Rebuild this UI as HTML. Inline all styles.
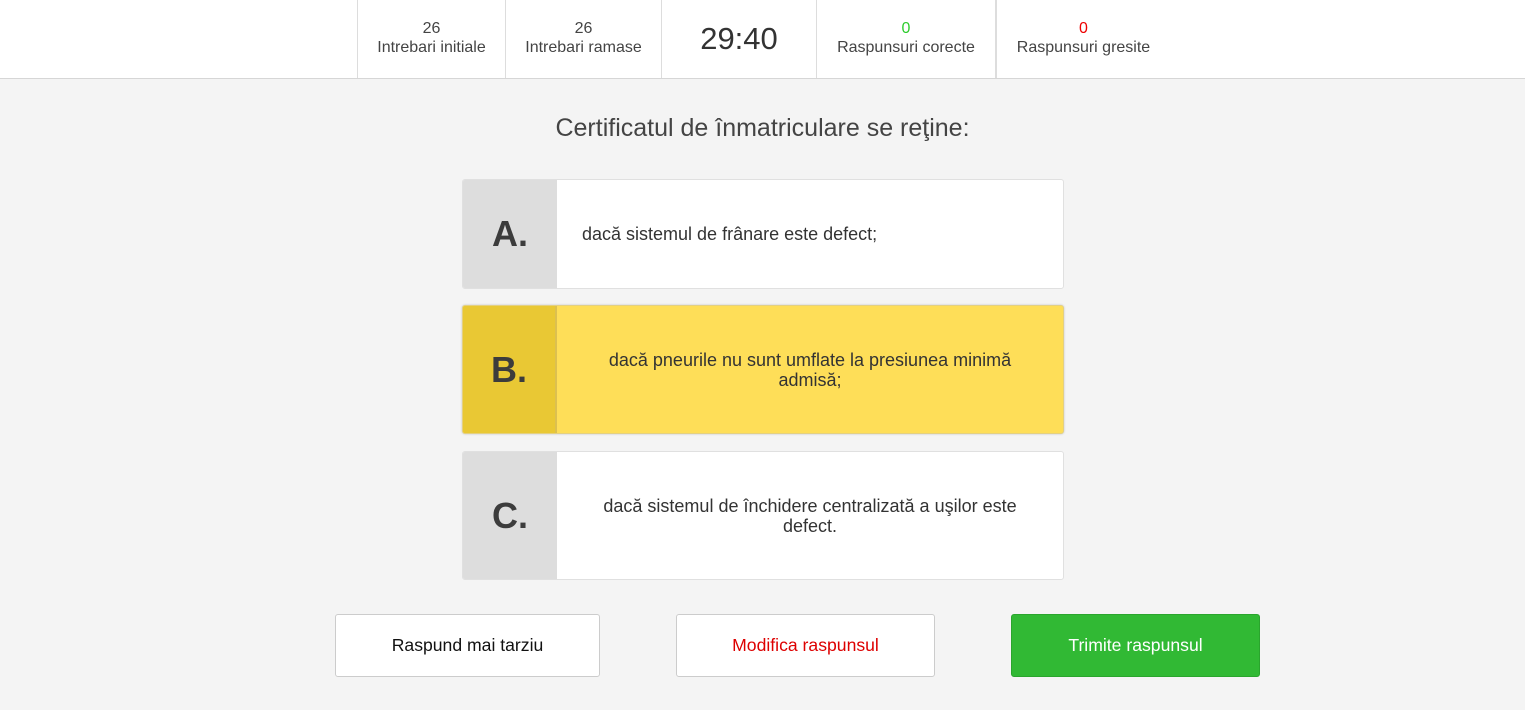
<!DOCTYPE html>
<html><head><meta charset="utf-8"><style>
*{box-sizing:border-box;margin:0;padding:0}
body{width:1525px;height:710px;background:#f4f4f4;font-family:"Liberation Sans",sans-serif;color:#333;overflow:hidden;position:relative}
.hdr{position:absolute;left:0;top:0;width:1525px;height:79px;background:#fff;border-bottom:1px solid #d6d6d6}
.c{position:absolute;top:0;height:78px;border-left:1px solid #ddd;text-align:center;font-size:16px;color:#444}
.c .n{position:absolute;top:20px;left:0;right:0;line-height:17px}
.c .l{position:absolute;top:39px;left:0;right:0;line-height:18px}
.t{font-size:31px;color:#333;line-height:78px}
h1{position:absolute;top:114px;left:0;width:1525px;text-align:center;font-weight:normal;font-size:25px;color:#444}
.card{position:absolute;left:462px;width:602px;background:#fff;border:1px solid #e0e0e0;border-radius:3px;overflow:hidden;display:flex}
.card .let{width:94px;background:#ddd;font-weight:bold;font-size:36px;color:#3c3c3c;display:flex;align-items:center;justify-content:center}
.card .tx{flex:1;display:flex;align-items:center;justify-content:center;text-align:center;font-size:18px;line-height:20px;color:#333;padding:0 44px}
.sel{background:#fede58;border-color:#e4d080;box-shadow:0 0 2px rgba(0,0,0,.2)}
.sel .let{background:#e9c834;border-right:2px solid #dcc050}
.btn{position:absolute;top:614px;height:63px;border:1px solid #ccc;border-radius:3px;background:#fff;font-size:17.6px;display:flex;align-items:center;justify-content:center}
</style></head><body>
<div class="hdr">
<div class="c" style="left:357px;width:148px"><div class="n">26</div><div class="l">Intrebari initiale</div></div>
<div class="c" style="left:505px;width:156px"><div class="n">26</div><div class="l">Intrebari ramase</div></div>
<div class="c t" style="left:661px;width:155px">29:40</div>
<div class="c" style="left:816px;width:179px"><div class="n" style="color:#2ecc2e">0</div><div class="l">Raspunsuri corecte</div></div>
<div class="c" style="left:995px;width:175px;border-left:2px solid #ddd"><div class="n" style="color:#e00">0</div><div class="l">Raspunsuri gresite</div></div>
</div>
<h1>Certificatul de înmatriculare se reţine:</h1>
<div class="card" style="top:179px;height:110px"><div class="let">A.</div><div class="tx" style="justify-content:flex-start;padding-left:25px;text-align:left">dacă sistemul de frânare este defect;</div></div>
<div class="card sel" style="top:305px;height:129px"><div class="let">B.</div><div class="tx">dacă pneurile nu sunt umflate la presiunea minimă admisă;</div></div>
<div class="card" style="top:451px;height:129px"><div class="let">C.</div><div class="tx">dacă sistemul de închidere centralizată a uşilor este defect.</div></div>
<div class="btn" style="left:335px;width:265px;color:#111">Raspund mai tarziu</div>
<div class="btn" style="left:676px;width:259px;color:#d00">Modifica raspunsul</div>
<div class="btn" style="left:1011px;width:249px;background:#31b934;border-color:#2aa52d;color:#fff">Trimite raspunsul</div>
</body></html>
